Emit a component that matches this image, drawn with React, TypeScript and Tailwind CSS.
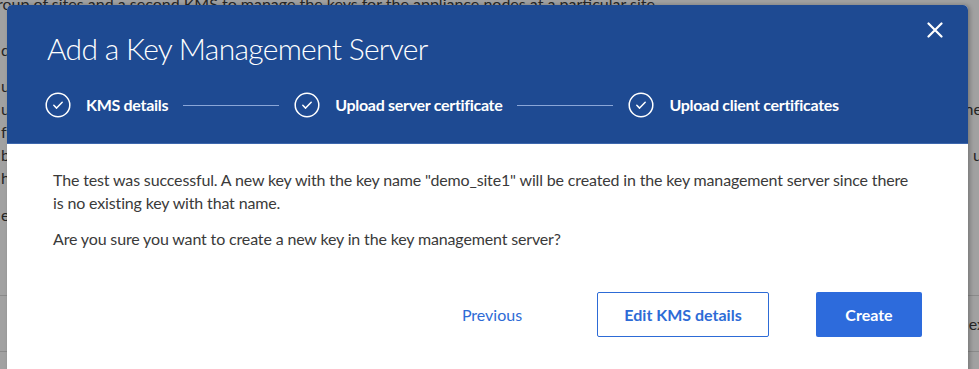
import React from 'react';

const STEPS = ['KMS details', 'Upload server certificate', 'Upload client certificates'];

function CheckCircle() {
  return (
    <svg width="26" height="26" viewBox="0 0 26 26" fill="none" className="shrink-0">
      <circle cx="13" cy="13" r="11.8" stroke="white" strokeWidth="1.5" />
      <path d="M8.8 13.3l2.8 2.8 5.6-5.9" stroke="white" strokeWidth="1.5" strokeLinecap="round" strokeLinejoin="round" />
    </svg>
  );
}

function BackgroundPage() {
  // the page behind the modal, dimmed by the overlay
  const rows: { left: string; right: string; mt: string }[] = [
    { left: 'd', right: '', mt: 'mt-[23px]' },
    { left: 'u', right: '', mt: 'mt-[13px]' },
    { left: 'u', right: 'ne', mt: 'mt-[0px]' },
    { left: 'f', right: '', mt: 'mt-[0px]' },
    { left: 'b', right: 'u', mt: 'mt-[0px]' },
    { left: 'h', right: '', mt: 'mt-[0px]' },
    { left: 'e', right: '', mt: 'mt-[14px]' },
  ];
  return (
    <div className="flex h-full flex-col text-[16px] leading-[23px] text-[#262626]">
      <div className="-mt-[8px] -ml-[3px] whitespace-nowrap">
        roup of sites and a second KMS to manage the keys for the appliance nodes at a particular site.
      </div>
      {rows.map((r, i) => (
        <div key={i} className={`flex justify-between px-[1px] ${r.mt}`}>
          <span>{r.left}</span>
          <span className="-mr-[4px]">{r.right}</span>
        </div>
      ))}
      <div className="mt-[69px] border-t border-[#8a8a8a]" />
      <div className="mt-[16px] flex justify-end">
        <span className="-mr-[6px]">ex</span>
      </div>
      <div className="mt-[16px] border-t border-[#8a8a8a]" />
    </div>
  );
}

export default function App() {
  return (
    <div className="relative h-[369px] w-[979px] overflow-hidden bg-[#a1a1a1] font-['Lato',sans-serif]">
      <BackgroundPage />

      {/* Modal */}
      <div className="absolute top-[5px] left-[7px] flex h-[400px] w-[961px] flex-col overflow-hidden rounded-t-[5px] bg-white shadow-[2px_0_4px_rgba(0,0,0,0.25)]">
        <header className="relative flex h-[139px] shrink-0 flex-col border-b border-[#3d67ad] bg-[#1e4a92] px-[38px] text-white">
          <h1 className="mt-[23px] ml-[2px] text-[30px] leading-[40px] font-light tracking-[-0.7px]">
            Add a Key Management Server
          </h1>
          <button className="absolute top-[13px] right-[21px] p-[4px]" aria-label="Close">
            <svg width="16" height="16" viewBox="0 0 16 16" fill="none">
              <path d="M1.5 1.5l13 13M14.5 1.5l-13 13" stroke="white" strokeWidth="2.2" strokeLinecap="round" />
            </svg>
          </button>

          <ol className="mt-[24px] flex items-center">
            {STEPS.map((s, i) => (
              <li key={s} className="flex items-center">
                <CheckCircle />
                <span className="ml-[15px] text-[16px] font-bold tracking-[-0.3px] whitespace-nowrap">{s}</span>
                {i < STEPS.length - 1 && (
                  <span className="mr-[15px] ml-[15px] h-px w-[96px] bg-[#8aa6d8]" />
                )}
              </li>
            ))}
          </ol>
        </header>

        <div className="flex flex-col px-[46px] pt-[24px] text-[16px] leading-[23px] tracking-[-0.15px] text-[#3a3a3a]">
          <p>
            The test was successful. A new key with the key name "demo_site1" will be created in the key management server since there
            <br />
            is no existing key with that name.
          </p>
          <p className="mt-[13px]">
            Are you sure you want to create a new key in the key management server?
          </p>

          <div className="mt-[42px] flex items-center justify-end gap-[47px] tracking-normal">
            <button className="h-[45px] w-[116px] text-[16px] text-[#2d6bd6]">Previous</button>
            <button className="h-[45px] w-[172px] rounded-[2px] border-[1.5px] border-[#2d6bd6] text-[16px] font-bold text-[#2d6bd6]">
              Edit KMS details
            </button>
            <button className="h-[45px] w-[106px] rounded-[2px] bg-[#2d6bdc] text-[16px] font-bold text-white">
              Create
            </button>
          </div>
        </div>
      </div>
    </div>
  );
}
